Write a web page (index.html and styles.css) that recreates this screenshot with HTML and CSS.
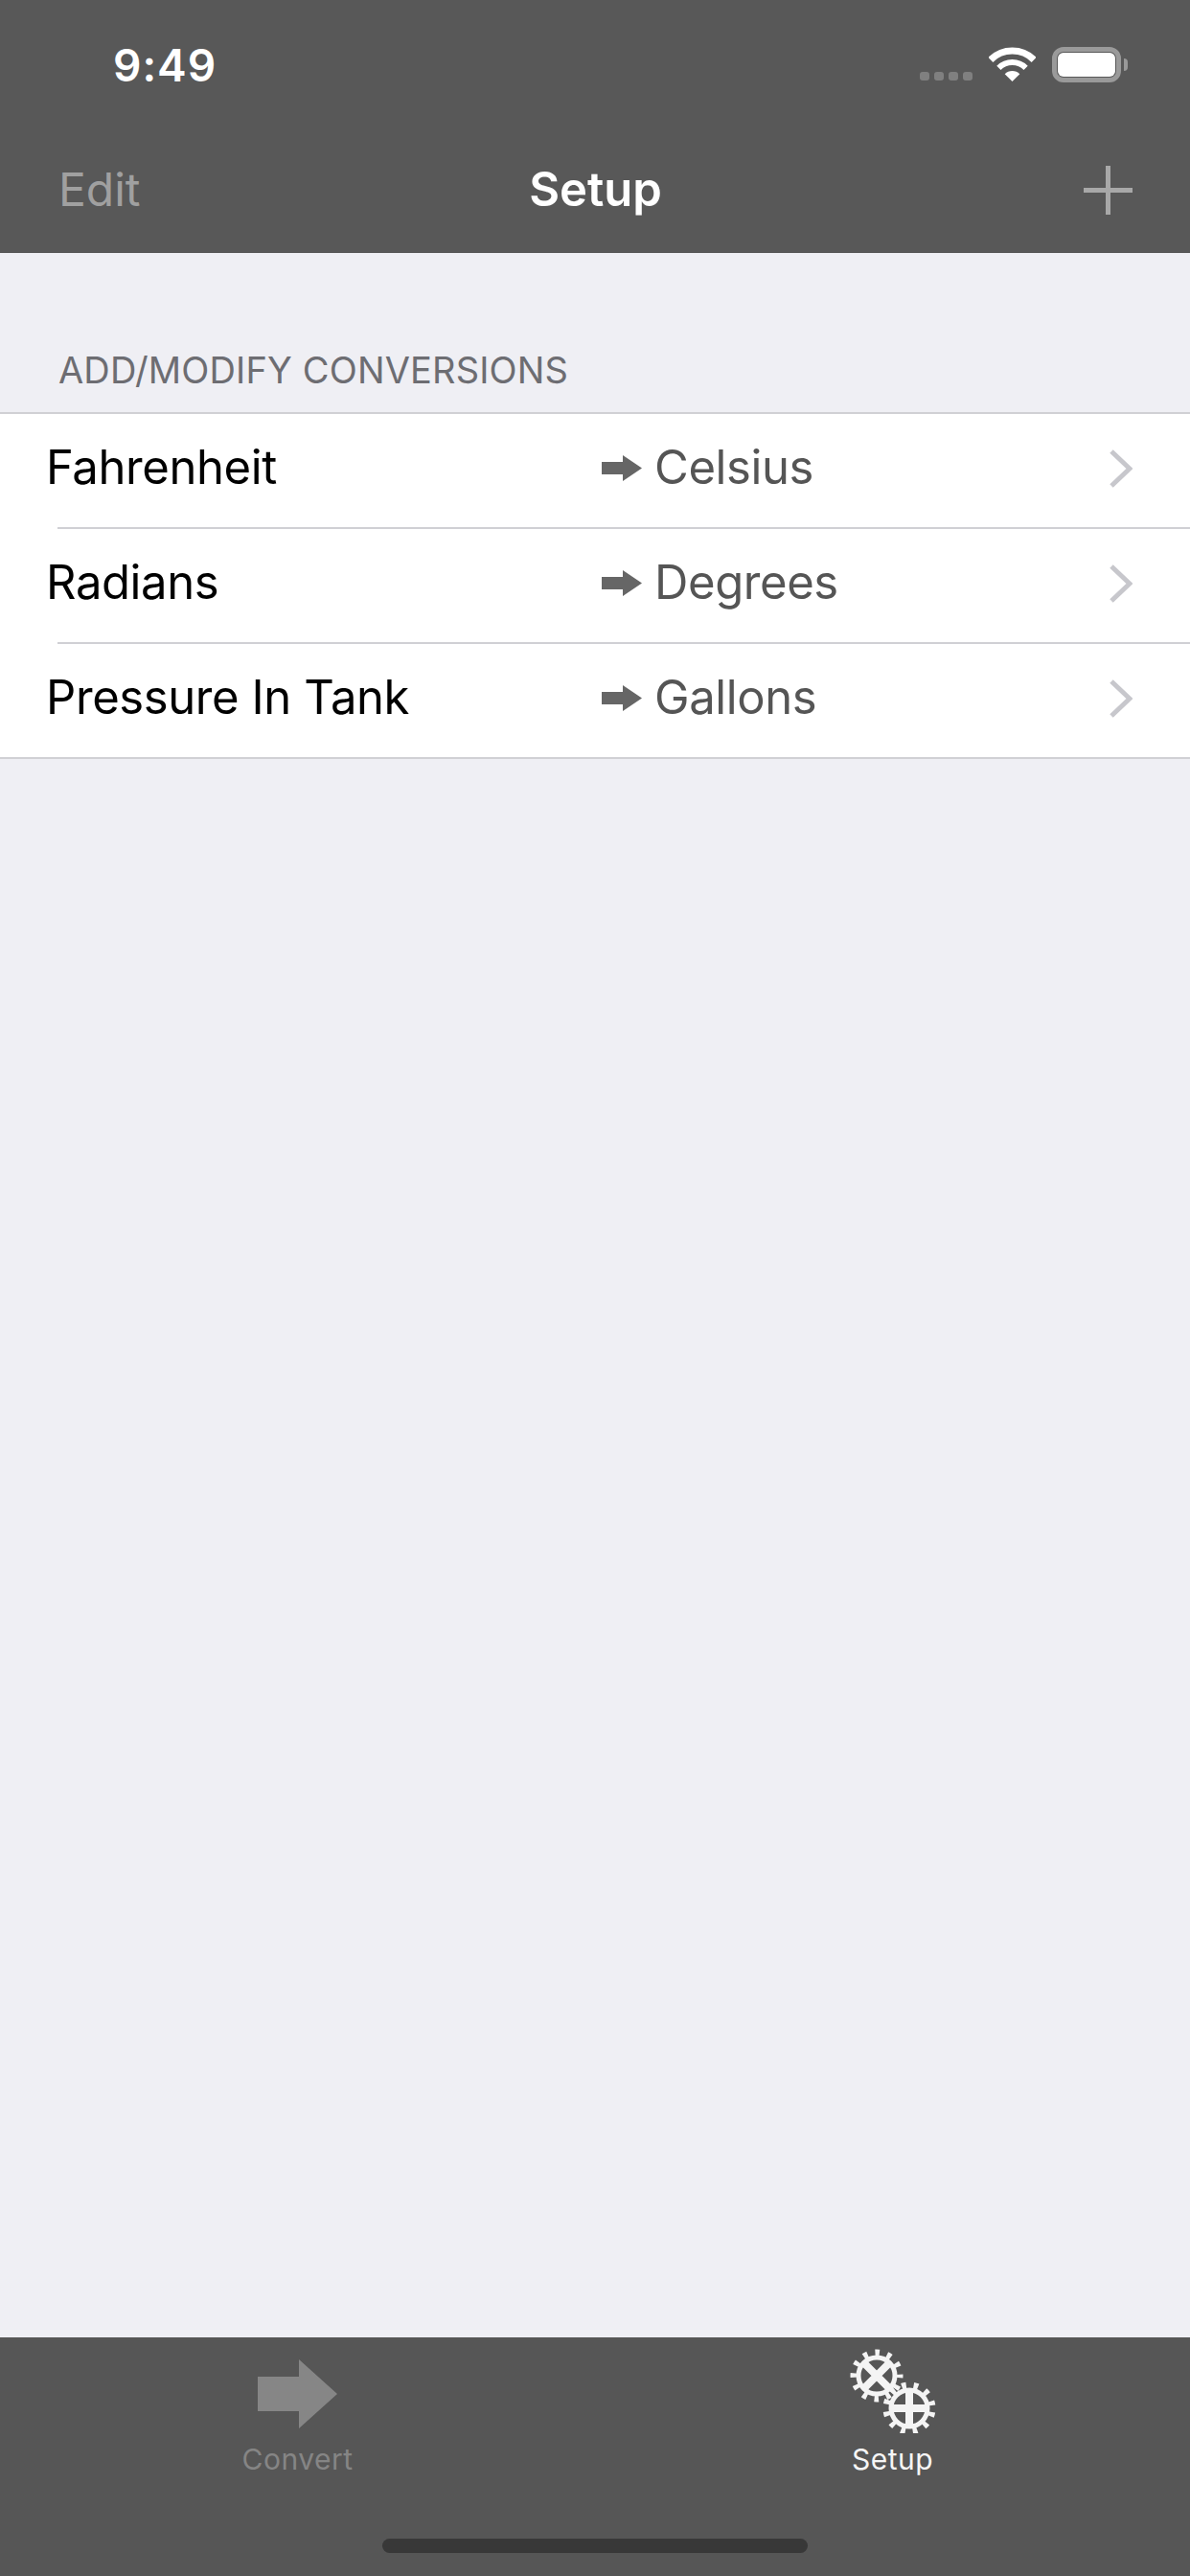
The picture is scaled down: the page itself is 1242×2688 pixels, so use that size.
FILE: index.html
```html
<!DOCTYPE html>
<html lang="en">
<head>
    <meta charset="UTF-8">
    <meta name="viewport" content="width=device-width, initial-scale=1.0">
    <title>Setup</title>
    <link rel="stylesheet" href="styles.css">
</head>
<body>
    <header class="header">
        <div class="status-bar">
            <span class="clock">9:49</span>
            <div class="status-icons">
                <div class="signal">
                    <span></span><span></span><span></span><span></span>
                </div>
                <svg class="wifi" width="49" height="36" viewBox="0 0 49 36">
                    <path d="M1.9 13.4A32 32 0 0 1 47.1 13.4" fill="none" stroke="#fff" stroke-width="7"/>
                    <path d="M10.4 21.9A20 20 0 0 1 38.6 21.9" fill="none" stroke="#fff" stroke-width="6"/>
                    <path d="M24.5 36L16.7 28.2A11 11 0 0 1 32.3 28.2Z" fill="#fff"/>
                </svg>
                <div class="battery"><div class="battery-level"></div></div>
                <div class="battery-nub"></div>
            </div>
        </div>
        <nav class="nav-bar">
            <span class="nav-edit">Edit</span>
            <span class="nav-title">Setup</span>
            <svg class="nav-add" width="51" height="51" viewBox="0 0 51 51">
                <path d="M25.5 0V51M0 25.5H51" stroke="#a8a8a8" stroke-width="5"/>
            </svg>
        </nav>
    </header>

    <main class="content">
        <h2 class="section-title">ADD/MODIFY CONVERSIONS</h2>
        <div class="list">
            <div class="row">
                <span class="row-name">Fahrenheit</span>
                <svg class="row-arrow" width="42" height="27" viewBox="0 0 42 27"><path d="M0 7H22V0L42 13.5L22 27V20H0Z" fill="#666"/></svg>
                <span class="row-target">Celsius</span>
                <svg class="row-chevron" width="24" height="40" viewBox="0 0 24 40"><path d="M2 2L21 20L2 38" fill="none" stroke="#c7c7cc" stroke-width="5"/></svg>
            </div>
            <div class="row-sep"></div>
            <div class="row">
                <span class="row-name">Radians</span>
                <svg class="row-arrow" width="42" height="27" viewBox="0 0 42 27"><path d="M0 7H22V0L42 13.5L22 27V20H0Z" fill="#666"/></svg>
                <span class="row-target">Degrees</span>
                <svg class="row-chevron" width="24" height="40" viewBox="0 0 24 40"><path d="M2 2L21 20L2 38" fill="none" stroke="#c7c7cc" stroke-width="5"/></svg>
            </div>
            <div class="row-sep"></div>
            <div class="row">
                <span class="row-name">Pressure In Tank</span>
                <svg class="row-arrow" width="42" height="27" viewBox="0 0 42 27"><path d="M0 7H22V0L42 13.5L22 27V20H0Z" fill="#666"/></svg>
                <span class="row-target">Gallons</span>
                <svg class="row-chevron" width="24" height="40" viewBox="0 0 24 40"><path d="M2 2L21 20L2 38" fill="none" stroke="#c7c7cc" stroke-width="5"/></svg>
            </div>
        </div>
    </main>

    <footer class="tab-bar">
        <div class="tabs">
            <div class="tab">
                <svg class="tab-icon" width="83" height="72" viewBox="0 0 83 72">
                    <path d="M0 18H43V0L83 36L43 72V54H0Z" fill="#868686"/>
                </svg>
                <span class="tab-label">Convert</span>
            </div>
            <div class="tab tab-active">
                <svg class="tab-icon" width="90" height="88" viewBox="0 0 90 88">
                    <g fill="none" stroke="#f4f4f4">
                        <g transform="translate(28 28)">
                            <circle r="23.5" stroke-width="8" stroke-dasharray="4.5 7.8" stroke-dashoffset="2.25"/>
                            <circle r="19" stroke-width="5"/>
                            <path d="M-13-13L13 13M13-13L-13 13" stroke-width="8"/>
                        </g>
                        <g transform="translate(62 62)">
                            <circle r="23.5" stroke-width="8" stroke-dasharray="4.5 7.8" stroke-dashoffset="8.4"/>
                            <circle r="19" stroke-width="5"/>
                            <path d="M0-18V18M-18 0H18" stroke-width="8"/>
                        </g>
                    </g>
                </svg>
                <span class="tab-label">Setup</span>
            </div>
        </div>
        <div class="home-bar"></div>
    </footer>
</body>
</html>
```

FILE: styles.css
```css
body {
    margin: 0;
    width: 1242px;
    height: 2688px;
    display: flex;
    flex-direction: column;
    background: #efeff4;
    font-family: Inter, "Liberation Sans", sans-serif;
    overflow: hidden;
}
.header {
    background: #585858;
    height: 264px;
    flex-shrink: 0;
}
.status-bar {
    height: 132px;
    display: flex;
    justify-content: space-between;
    align-items: flex-start;
    padding: 0 65px 0 118px;
    box-sizing: border-box;
}
.clock {
    color: #fff;
    font-size: 46px;
    font-weight: 600;
    line-height: 54px;
    margin-top: 41px;
    letter-spacing: 1px;
}
.status-icons {
    display: flex;
    align-items: flex-start;
    margin-top: 49px;
}
.signal {
    display: flex;
    gap: 5px;
    margin-top: 26px;
    margin-right: 17px;
}
.signal span {
    width: 10px;
    height: 9px;
    background: #808080;
    border-radius: 3px;
}
.wifi {
    margin-right: 17px;
}
.battery {
    width: 72px;
    height: 37px;
    border: 5px solid #9a9a9a;
    border-radius: 12px;
    box-sizing: border-box;
    padding: 1px;
}
.battery-level {
    height: 100%;
    background: #fff;
    border-radius: 6px;
}
.battery-nub {
    width: 4px;
    height: 13px;
    background: #9a9a9a;
    border-radius: 0 4px 4px 0;
    margin: 12px 0 0 3px;
}
.nav-bar {
    height: 132px;
    display: grid;
    grid-template-columns: 1fr auto 1fr;
    align-items: center;
    padding: 0 60px 0 61px;
}
.nav-edit {
    color: #a0a0a0;
    font-size: 48px;
    line-height: 64px;
}
.nav-title {
    color: #fff;
    font-size: 49px;
    font-weight: 600;
    line-height: 64px;
}
.nav-add {
    justify-self: end;
}
.content {
    flex: 1;
}
.section-title {
    margin: 0;
    height: 166px;
    padding: 98px 0 0 61px;
    box-sizing: border-box;
    color: #6d6d72;
    font-size: 38px;
    font-weight: 400;
    line-height: 48px;
    letter-spacing: 0.15px;
}
.list {
    background: #fff;
    border-top: 2px solid #d0d0d4;
    border-bottom: 2px solid #d0d0d4;
}
.row {
    height: 118px;
    display: flex;
    align-items: center;
    padding: 0 60px 0 48px;
}
.row-sep {
    height: 2px;
    margin-left: 60px;
    background: #d0d0d4;
}
.row-name {
    width: 580px;
    color: #000;
    font-size: 49px;
    letter-spacing: -0.4px;
    margin-bottom: 8px;
}
.row-arrow {
    margin-right: 13px;
    margin-bottom: 6px;
}
.row-target {
    flex: 1;
    color: #555;
    font-size: 49px;
    letter-spacing: -0.4px;
    margin-bottom: 8px;
}
.row-chevron {
    margin-bottom: 5px;
}
.tab-bar {
    height: 249px;
    background: #565656;
    flex-shrink: 0;
}
.tabs {
    height: 210px;
    display: grid;
    grid-template-columns: 1fr 1fr;
}
.tab {
    height: 150px;
    display: flex;
    flex-direction: column;
    align-items: center;
    padding-top: 23px;
    box-sizing: border-box;
}
.tab-active {
    padding-top: 12px;
}
.tab-icon {
    flex-shrink: 0;
}
.tab-label {
    color: #858585;
    font-size: 30px;
    line-height: 36px;
    margin-top: 14px;
    letter-spacing: 0.5px;
}
.tab-active .tab-label {
    color: #f5f5f5;
    margin-top: 9px;
}
.home-bar {
    width: 444px;
    height: 15px;
    background: #383838;
    border-radius: 8px;
    margin: 0 auto;
}
```
